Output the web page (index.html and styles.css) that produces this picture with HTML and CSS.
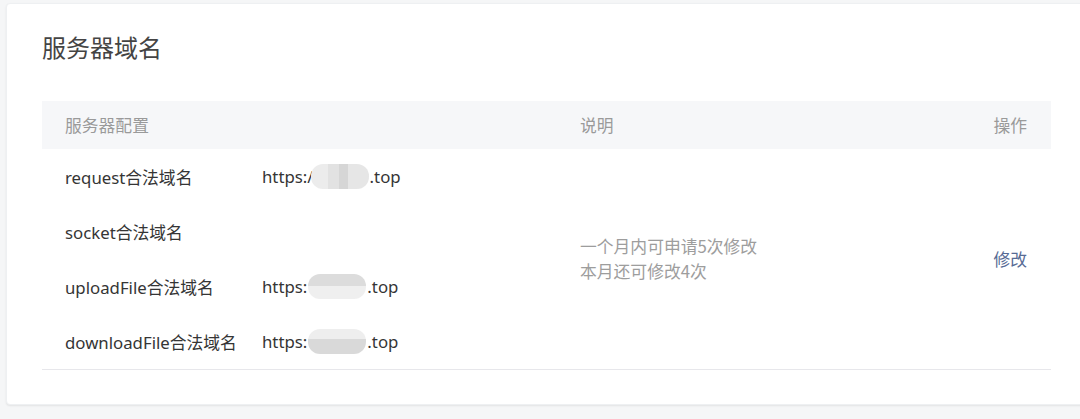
FILE: index.html
```html
<!DOCTYPE html>
<html lang="zh-CN">
<head>
<meta charset="utf-8">
<link rel="stylesheet" href="styles.css">
</head>
<body>
<div class="page">
  <section class="card">
    <h2 class="title">服务器域名</h2>
    <div class="table">
      <div class="th th-config">服务器配置</div>
      <div class="th th-desc">说明</div>
      <div class="th th-op">操作</div>

      <div class="td name r1">request合法域名</div>
      <div class="td url r1">https:/<span class="mask m1"></span>.top</div>
      <div class="td name r2">socket合法域名</div>
      <div class="td url r2"></div>
      <div class="td name r3">uploadFile合法域名</div>
      <div class="td url r3">https:<span class="mask m2"></span>.top</div>
      <div class="td name r4">downloadFile合法域名</div>
      <div class="td url r4">https:<span class="mask m3"></span>.top</div>

      <div class="td desc">
        <div>一个月内可申请5次修改</div>
        <div>本月还可修改4次</div>
      </div>
      <div class="td op"><a class="link" href="#">修改</a></div>
    </div>
  </section>
</div>
</body>
</html>
```

FILE: styles.css
```css
html, body {
  margin: 0;
  padding: 0;
}
body {
  background: #f5f6f7;
  font-family: "Noto Sans", "Noto Sans CJK SC", sans-serif;
  color: #353535;
}
.page {
  padding: 3px 0 0 6px;
  height: 416px;
  overflow: hidden;
}
.card {
  background: #fff;
  border-radius: 4px;
  box-shadow: 0 1px 2px rgba(0,0,0,0.08);
  border: 1px solid #eef0f2;
  height: 402px;
  margin-right: -20px;
  padding: 0 0 0 35px;
  box-sizing: border-box;
}
.title {
  margin: 0;
  padding-top: 26px;
  height: 97px;
  box-sizing: border-box;
  font-weight: 400;
  font-size: 24px;
  line-height: 34px;
  color: #444;
  font-family: "Noto Sans CJK SC", sans-serif;
}
.table {
  width: 1009px;
  display: grid;
  grid-template-columns: 220px 318px 1fr auto;
  grid-template-rows: 48px 55px 55px 55px 55px;
  border-bottom: 1px solid #e7e7eb;
  box-sizing: border-box;
}
.th {
  background: #f6f7f9;
  color: #9a9a9a;
  font-size: 16.8px;
  display: flex;
  align-items: center;
  font-family: "Noto Sans CJK SC", sans-serif;
}
.th-config {
  grid-column: 1 / 3;
  padding-left: 23px;
}
.th-op {
  padding-right: 24px;
  justify-content: flex-end;
}
.td {
  display: flex;
  align-items: center;
  font-size: 16.8px;
}
.name {
  grid-column: 1;
  padding-left: 23px;
}
.url {
  grid-column: 2;
}
.r1 { grid-row: 2; }
.r2 { grid-row: 3; }
.r3 { grid-row: 4; }
.r4 { grid-row: 5; }
.desc {
  grid-column: 3;
  grid-row: 2 / 6;
  flex-direction: column;
  align-items: flex-start;
  justify-content: center;
  color: #9d9d9d;
  font-size: 16.8px;
  line-height: 25px;
  font-family: "Noto Sans CJK SC", sans-serif;
  padding-bottom: 0;
}
.op {
  grid-column: 4;
  grid-row: 2 / 6;
  padding-right: 24px;
  justify-content: flex-end;
}
.link {
  color: #576b95;
  text-decoration: none;
  font-size: 16.8px;
  font-family: "Noto Sans CJK SC", sans-serif;
}
.mask {
  display: inline-block;
  width: 58px;
  height: 25px;
  border-radius: 12px;
  margin: 0 1px;
  background: linear-gradient(90deg, #ececec 0, #ececec 30%, #e2e2e2 30%, #e2e2e2 48%, #d6d6d6 48%, #d6d6d6 64%, #e6e6e6 64%, #e6e6e6 100%);
}
.m1 { margin-left: -3px; }
.m2 { background: linear-gradient(180deg, #dcdcdc 0, #dcdcdc 50%, #efefef 50%, #efefef 100%); }
.m3 { background: linear-gradient(180deg, #eeeeee 0, #eeeeee 40%, #d9d9d9 40%, #d9d9d9 100%); }
```
